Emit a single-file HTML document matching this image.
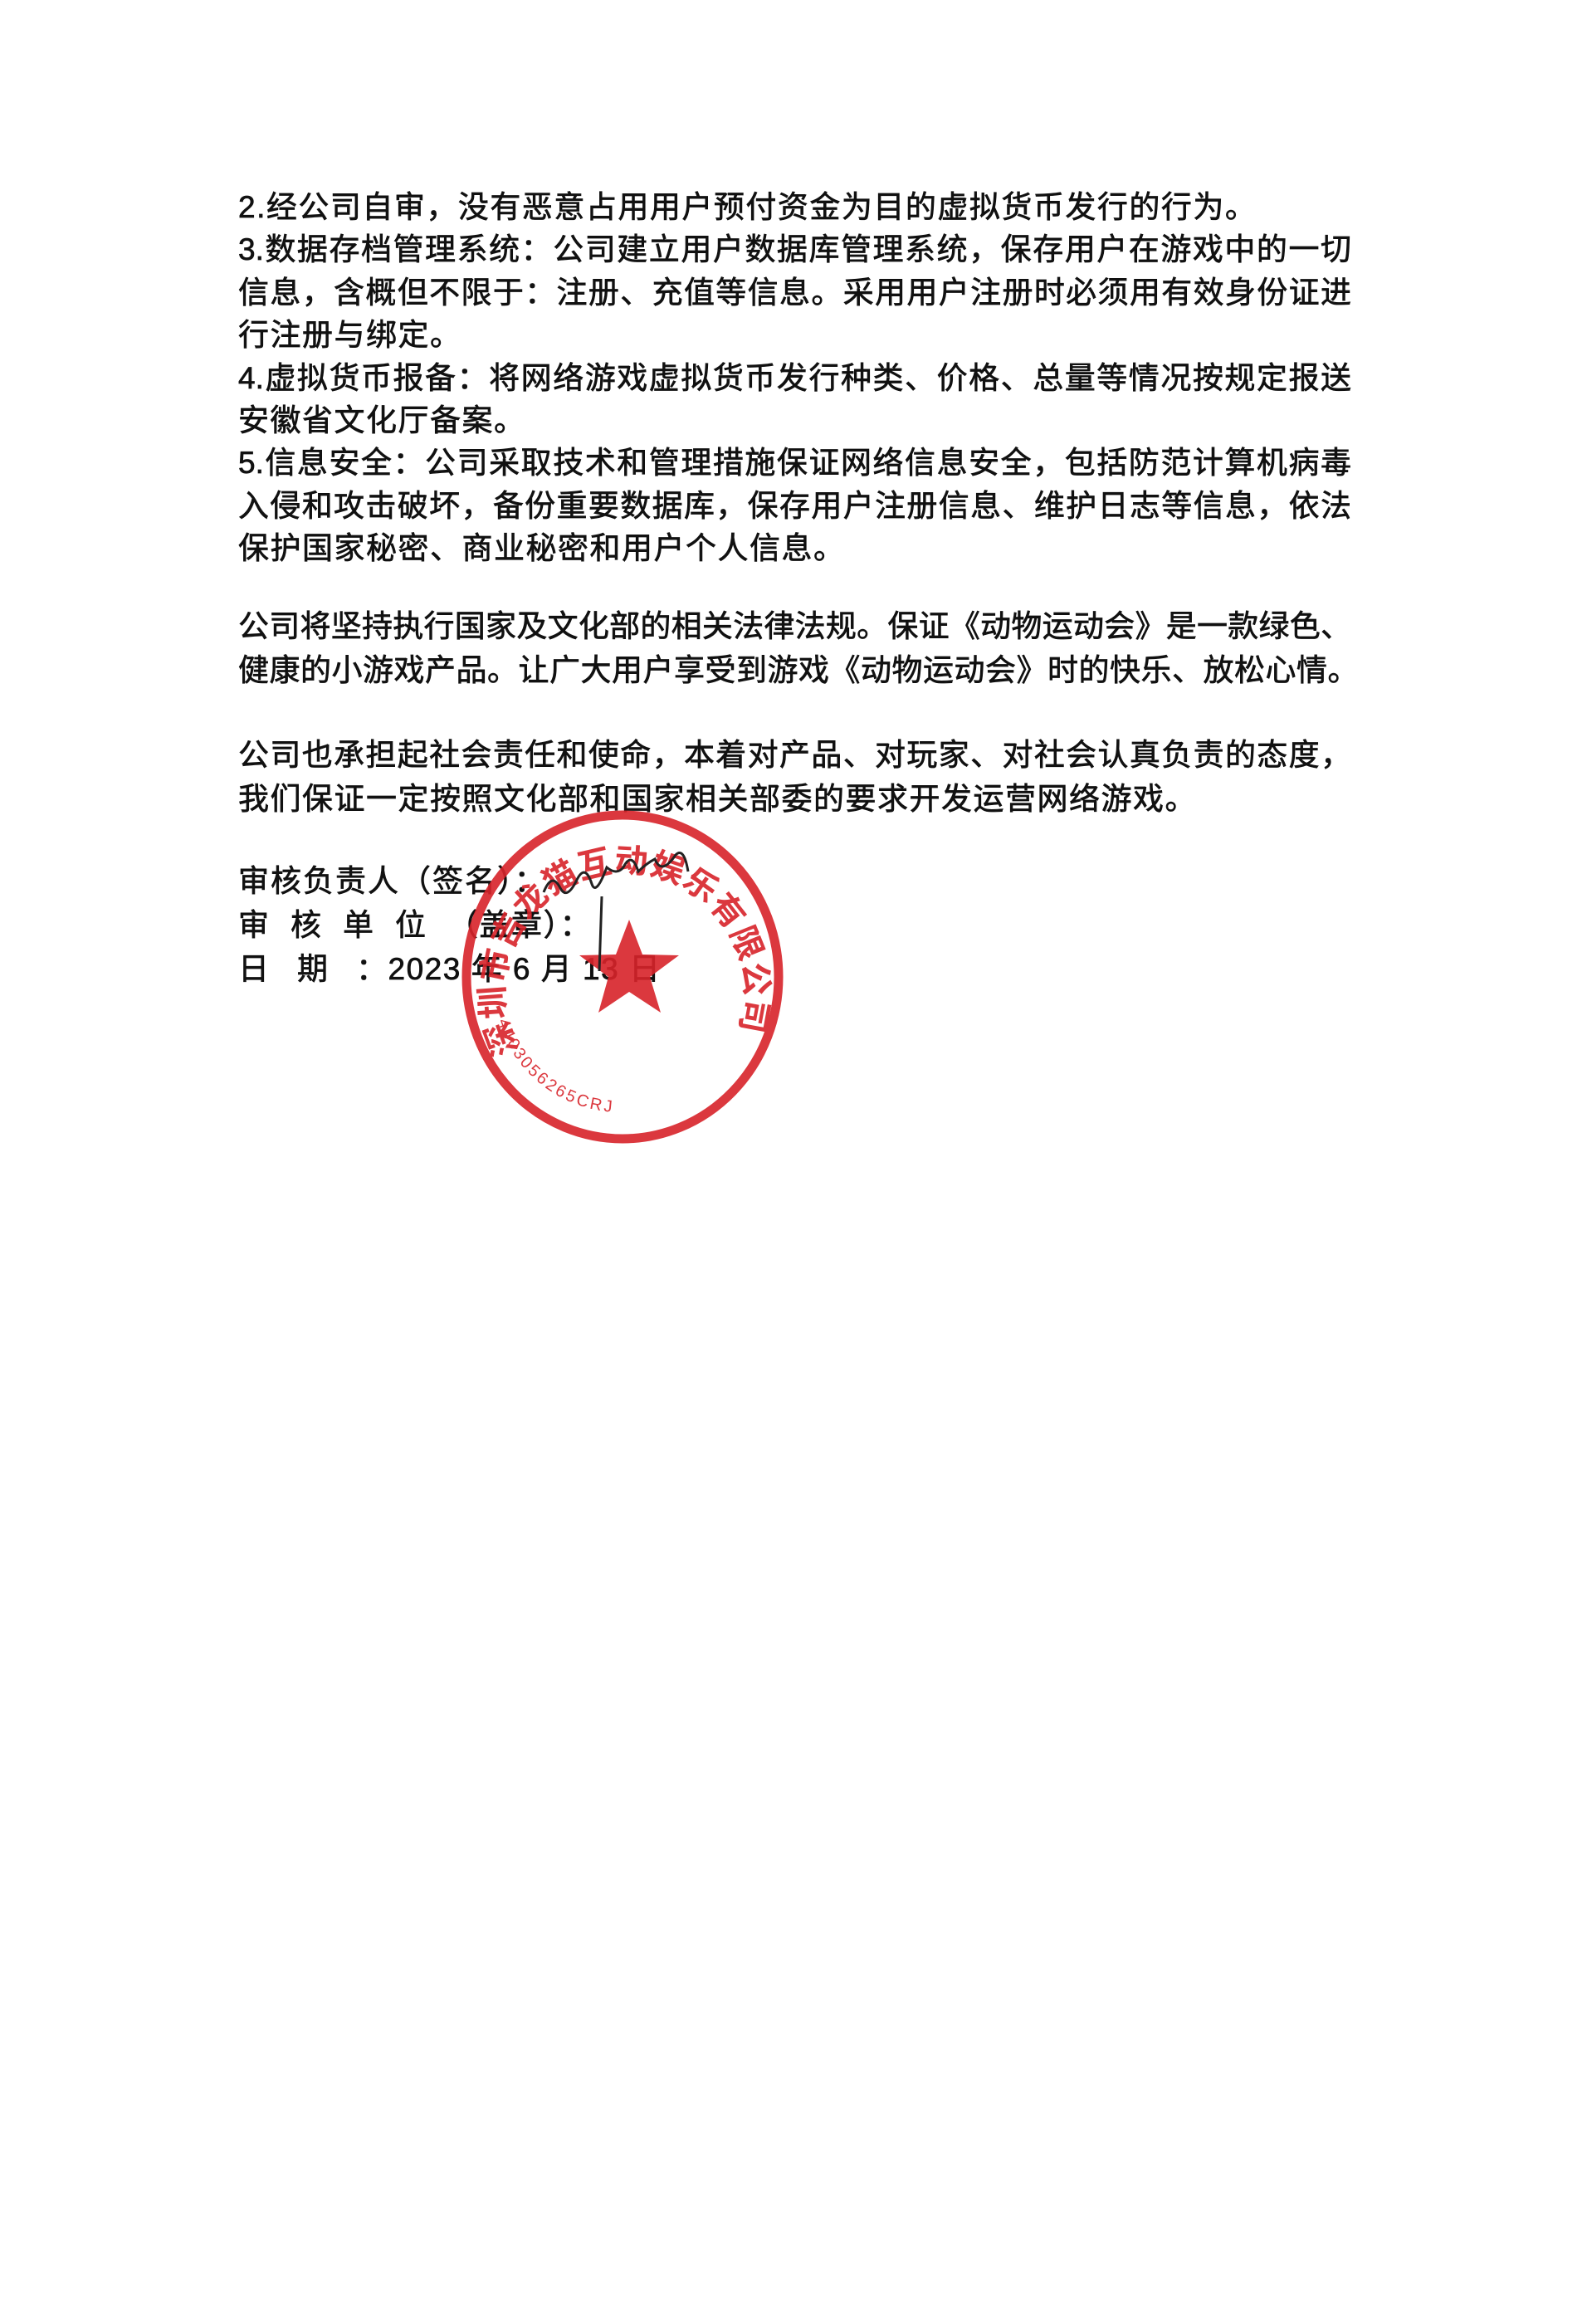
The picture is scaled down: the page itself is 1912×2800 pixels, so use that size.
<!DOCTYPE html>
<html><head><meta charset="utf-8"><style>
html,body{margin:0;padding:0;background:#fff}
body{width:1912px;height:2800px;position:relative;overflow:hidden;font-family:"Liberation Sans","Noto Sans CJK SC",sans-serif;color:#111}
.l{position:absolute;left:287px;font-size:37px;line-height:52px;height:52px;white-space:nowrap;letter-spacing:1.5px;-webkit-text-stroke:0.7px #111}
.f{width:1341px;text-align:justify;text-align-last:justify;letter-spacing:0}
</style></head><body>
<div class="l" style="top:224px">2.经公司自审，没有恶意占用用户预付资金为目的虚拟货币发行的行为。</div>
<div class="l f" style="top:275px">3.数据存档管理系统：公司建立用户数据库管理系统，保存用户在游戏中的一切</div>
<div class="l f" style="top:327px">信息，含概但不限于：注册、充值等信息。采用用户注册时必须用有效身份证进</div>
<div class="l" style="top:378px">行注册与绑定。</div>
<div class="l f" style="top:430px">4.虚拟货币报备：将网络游戏虚拟货币发行种类、价格、总量等情况按规定报送</div>
<div class="l" style="top:481px">安徽省文化厅备案。</div>
<div class="l f" style="top:532px">5.信息安全：公司采取技术和管理措施保证网络信息安全，包括防范计算机病毒</div>
<div class="l f" style="top:584px">入侵和攻击破坏，备份重要数据库，保存用户注册信息、维护日志等信息，依法</div>
<div class="l" style="top:635px">保护国家秘密、商业秘密和用户个人信息。</div>

<div class="l f" style="top:729px">公司将坚持执行国家及文化部的相关法律法规。保证《动物运动会》是一款绿色、</div>
<div class="l" style="top:782px;letter-spacing:0.5px">健康的小游戏产品。让广大用户享受到游戏《动物运动会》时的快乐、放松心情。</div>

<div class="l f" style="top:884px">公司也承担起社会责任和使命，本着对产品、对玩家、对社会认真负责的态度，</div>
<div class="l" style="top:937px;letter-spacing:1.5px">我们保证一定按照文化部和国家相关部委的要求开发运营网络游戏。</div>

<div class="l" style="top:1036px;letter-spacing:2px">审核负责人（签名）：</div>
<div class="l" style="top:1089px"><span style="letter-spacing:26px">审核单位</span>（盖章）：</div>
<div class="l" style="top:1142px"><span style="letter-spacing:34px">日期</span>：2023 年 6 月 13 日</div>

<svg style="position:absolute;left:0;top:0" width="1912" height="2800">
<defs><path id="arc" d="M625,1265 A145,145 0 1 1 880,1265"/>
<path id="arc2" d="M600,1230 A155,155 0 0 0 745,1340"/></defs>
<g opacity="0.9">
<ellipse cx="750" cy="1177" rx="188" ry="195" fill="none" stroke="#d8232a" stroke-width="11"/>
<polygon fill="#d8232a" points="758,1108 774,1150 818,1151 783,1177 796,1220 758,1195 721,1220 733,1177 698,1151 742,1150"/>
<text font-family="Noto Sans CJK SC,sans-serif" font-size="40" font-weight="bold" fill="#d8232a" letter-spacing="1"><textPath href="#arc" startOffset="0%">深圳市吉龙猫互动娱乐有限公司</textPath></text>
<text font-family="Liberation Sans,sans-serif" font-size="20" fill="#d8232a" letter-spacing="3"><textPath href="#arc2">4403056265CRJ</textPath></text>
</g>
<path d="M655,1075 q10,-25 20,-5 q8,15 20,-10 q10,-20 18,5 q5,15 18,-20 q12,10 20,0 q10,-20 18,5 q10,-10 20,-15 q8,20 25,-5 q10,-10 15,20 M725,1080 l-3,90" fill="none" stroke="#222" stroke-width="3"/>
</svg>
</body></html>
